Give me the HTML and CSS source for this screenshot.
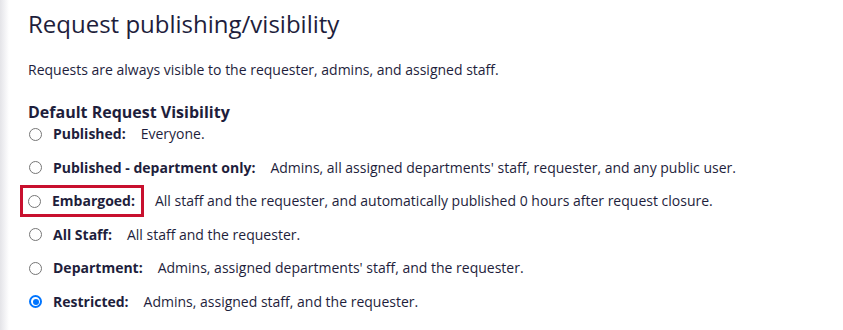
FILE: index.html
```html
<!DOCTYPE html>
<html lang="en">
<head>
<meta charset="utf-8">
<title>Request publishing/visibility</title>
<link rel="stylesheet" href="styles.css">
</head>
<body>
<div class="page">
  <div class="edge"></div>
  <main class="main">
    <h1 class="title">Request publishing/visibility</h1>
    <p class="intro">Requests are always visible to the requester, admins, and assigned staff.</p>
    <h2 class="section">Default Request Visibility</h2>
    <div class="options">
      <label class="option"><span class="radio"></span><span class="name">Published:</span><span class="desc">Everyone.</span></label>
      <label class="option"><span class="radio"></span><span class="name">Published - department only:</span><span class="desc">Admins, all assigned departments' staff, requester, and any public user.</span></label>
      <label class="option"><span class="highlight"><span class="radio"></span><span class="name">Embargoed:</span></span><span class="desc desc-boxed">All staff and the requester, and automatically published 0 hours after request closure.</span></label>
      <label class="option"><span class="radio"></span><span class="name">All Staff:</span><span class="desc">All staff and the requester.</span></label>
      <label class="option"><span class="radio"></span><span class="name">Department:</span><span class="desc">Admins, assigned departments' staff, and the requester.</span></label>
      <label class="option"><span class="radio checked"></span><span class="name">Restricted:</span><span class="desc">Admins, assigned staff, and the requester.</span></label>
    </div>
  </main>
</div>
</body>
</html>
```
FILE: styles.css
```css
html, body {
  margin: 0;
  padding: 0;
  background: #ffffff;
}
body {
  font-family: "Open Sans", "DejaVu Sans", sans-serif;
  color: #1e1e3c;
}
.page {
  display: flex;
  height: 330px;
}
.edge {
  width: 9px;
  flex: none;
  background: linear-gradient(to right, #e4e4e8, #f4f4f6 60%, #ffffff);
}
.main {
  padding-left: 19px;
  padding-top: 8px;
}
.title {
  margin: 0;
  font-size: 24px;
  font-weight: 400;
  line-height: 32px;
}
.intro {
  margin: 21px 0 0;
  font-size: 14px;
  line-height: 18px;
}
.section {
  margin: 22px 0 0;
  font-size: 16px;
  font-weight: 700;
  line-height: 22px;
}
.options {
  display: flex;
  flex-direction: column;
  gap: 13.6px;
  margin-top: 1px;
}
.option {
  display: flex;
  align-items: center;
  font-size: 14px;
  line-height: 20px;
}
.highlight {
  display: flex;
  align-items: center;
  margin: -6px 0 -6px -8px;
  padding: 3px 6px 3px 4px;
  border: 3px solid #c8102e;
}
.radio {
  width: 13px;
  height: 13px;
  border: 1px solid #767676;
  border-radius: 50%;
  box-sizing: border-box;
  margin-left: 1px;
  margin-right: 11px;
  flex: none;
  background: #fff;
  position: relative;
}
.radio.checked {
  border: 2px solid #0075ff;
}
.radio.checked::after {
  content: "";
  position: absolute;
  left: 1.5px;
  top: 1.5px;
  width: 6px;
  height: 6px;
  border-radius: 50%;
  background: #0075ff;
}
.name {
  font-weight: 700;
}
.desc {
  margin-left: 15px;
}
.desc-boxed {
  margin-left: 11px;
}
```
